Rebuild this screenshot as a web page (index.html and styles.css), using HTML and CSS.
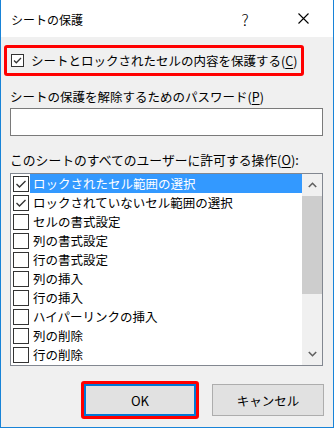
FILE: index.html
```html
<!DOCTYPE html>
<html lang="ja">
<head>
<meta charset="utf-8">
<title>シートの保護</title>
<link rel="stylesheet" href="styles.css">
</head>
<body>
<div class="window">
  <div class="titlebar">
    <span class="title">シートの保護</span>
    <span class="help">?</span>
    <span class="close"><svg width="11" height="11" viewBox="0 0 11 11"><path d="M0.5 0.5L10.5 10.5M10.5 0.5L0.5 10.5" stroke="#000" stroke-width="1.1" fill="none"/></svg></span>
  </div>
  <div class="content">
    <div class="protect">
      <span class="cb cb-small"><svg width="11" height="11" viewBox="0 0 11 11"><polyline points="2,5.5 4.3,7.8 9,3" stroke="#333" stroke-width="1.3" fill="none"/></svg></span>
      <span class="protect-text">シートとロックされたセルの内容を保護する(<u>C</u>)</span>
    </div>
    <div class="label pw-label">シートの保護を解除するためのパスワード(<u>P</u>)</div>
    <div class="input"></div>
    <div class="label perm-label">このシートのすべてのユーザーに許可する操作(<u>O</u>):</div>
    <div class="list">
      <div class="items">
        <div class="row selected"><span class="cb"><svg width="14" height="14" viewBox="0 0 14 14"><polyline points="2.5,7 5.5,10 11.5,4" stroke="#333" stroke-width="1.4" fill="none"/></svg></span><span class="text">ロックされたセル範囲の選択</span></div>
        <div class="row"><span class="cb"><svg width="14" height="14" viewBox="0 0 14 14"><polyline points="2.5,7 5.5,10 11.5,4" stroke="#333" stroke-width="1.4" fill="none"/></svg></span><span class="text">ロックされていないセル範囲の選択</span></div>
        <div class="row"><span class="cb"></span><span class="text">セルの書式設定</span></div>
        <div class="row"><span class="cb"></span><span class="text">列の書式設定</span></div>
        <div class="row"><span class="cb"></span><span class="text">行の書式設定</span></div>
        <div class="row"><span class="cb"></span><span class="text">列の挿入</span></div>
        <div class="row"><span class="cb"></span><span class="text">行の挿入</span></div>
        <div class="row"><span class="cb"></span><span class="text">ハイパーリンクの挿入</span></div>
        <div class="row"><span class="cb"></span><span class="text">列の削除</span></div>
        <div class="row"><span class="cb"></span><span class="text">行の削除</span></div>
      </div>
      <div class="scrollbar">
        <div class="arrow"><svg width="9" height="6" viewBox="0 0 9 6"><polyline points="0.8,5 4.5,1.3 8.2,5" stroke="#606060" stroke-width="1.6" fill="none"/></svg></div>
        <div class="track"><div class="thumb"></div></div>
        <div class="arrow"><svg width="9" height="6" viewBox="0 0 9 6"><polyline points="0.8,1 4.5,4.7 8.2,1" stroke="#606060" stroke-width="1.6" fill="none"/></svg></div>
      </div>
    </div>
    <div class="buttons">
      <div class="ok-ring"><button class="btn btn-default">OK</button></div>
      <button class="btn btn-cancel">キャンセル</button>
    </div>
  </div>
</div>
</body>
</html>
```

FILE: styles.css
```css
* {
  box-sizing: border-box;
}

html,
body {
  margin: 0;
  padding: 0;
}

body {
  width: 334px;
  height: 428px;
  overflow: hidden;
  font-family: "Noto Sans CJK JP", "Noto Sans", sans-serif;
  font-size: 12.5px;
  color: #000;
  background: #f0f0f0;
}

.window {
  width: 334px;
  height: 428px;
  border: 1px solid #1883d7;
  border-top: none;
  display: flex;
  flex-direction: column;
  background: #f0f0f0;
}

.titlebar {
  height: 37px;
  flex: none;
  background: #fff;
  display: flex;
  align-items: center;
  padding: 3px 20px 0 10px;
}

.title {
  flex: 1;
  font-size: 12px;
  line-height: 16px;
}

.help {
  width: 20px;
  text-align: center;
  font-size: 16px;
  font-weight: 300;
  line-height: 18px;
  margin-right: 38px;
  margin-top: -2px;
}

.close {
  width: 20px;
  display: flex;
  justify-content: center;
  margin-top: -3px;
}

.content {
  flex: 1;
  display: flex;
  flex-direction: column;
}

.protect {
  margin: 8px 0 0 3px;
  width: 300px;
  height: 31px;
  border: 3px solid #ff0000;
  border-radius: 3px;
  display: flex;
  align-items: center;
  padding-left: 4px;
}

.protect-text {
  line-height: 16px;
  white-space: nowrap;
}

.cb {
  flex: none;
  width: 16px;
  height: 16px;
  border: 1px solid #333;
  background: #fff;
  display: flex;
  align-items: center;
  justify-content: center;
}

.cb-small {
  width: 13px;
  height: 13px;
  margin-right: 7px;
}

u {
  text-decoration: underline;
  text-decoration-thickness: 1px;
  text-underline-offset: 2px;
}

.label {
  line-height: 16px;
  margin-left: 9px;
  white-space: nowrap;
}

.pw-label {
  margin-top: 13px;
}

.input {
  margin: 3px 0 0 9px;
  width: 313px;
  height: 28px;
  border: 1px solid #7a7a7a;
  background: #fff;
}

.perm-label {
  margin-top: 16px;
  font-size: 12.8px;
}

.list {
  margin: 5px 0 0 9px;
  width: 313px;
  height: 193px;
  flex: none;
  border: 1px solid #828790;
  background: #fff;
  display: flex;
  overflow: hidden;
}

.items {
  flex: 1;
  overflow: hidden;
}

.row {
  height: 19px;
  display: flex;
  align-items: center;
}

.row .cb {
  margin-left: 2px;
  margin-right: 1px;
}

.row .text {
  flex: 1;
  height: 19px;
  line-height: 19px;
  padding-left: 3px;
  white-space: nowrap;
}

.row.selected .text {
  background: #3399ff;
  color: #fff;
}

.scrollbar {
  width: 20px;
  flex: none;
  background: #f0f0f0;
  display: flex;
  flex-direction: column;
}

.arrow {
  height: 22px;
  flex: none;
  display: flex;
  align-items: center;
  justify-content: center;
}

.track {
  flex: 1;
}

.thumb {
  height: 98px;
  background: #cdcdcd;
}

.buttons {
  margin-top: 15px;
  padding-left: 80px;
  display: flex;
  align-items: center;
  height: 38px;
}

.ok-ring {
  border: 3px solid #ff0000;
  border-radius: 3px;
  display: flex;
}

.btn {
  width: 112px;
  height: 32px;
  background: #e1e1e1;
  border: 1px solid #adadad;
  font-family: "Noto Sans CJK JP", "Noto Sans", sans-serif;
  font-size: 12.5px;
  color: #000;
  padding: 0;
  margin: 0;
}

.btn-default {
  border: 2px solid #0078d7;
  font-size: 13px;
}

.btn-cancel {
  margin-left: 13px;
}
```
